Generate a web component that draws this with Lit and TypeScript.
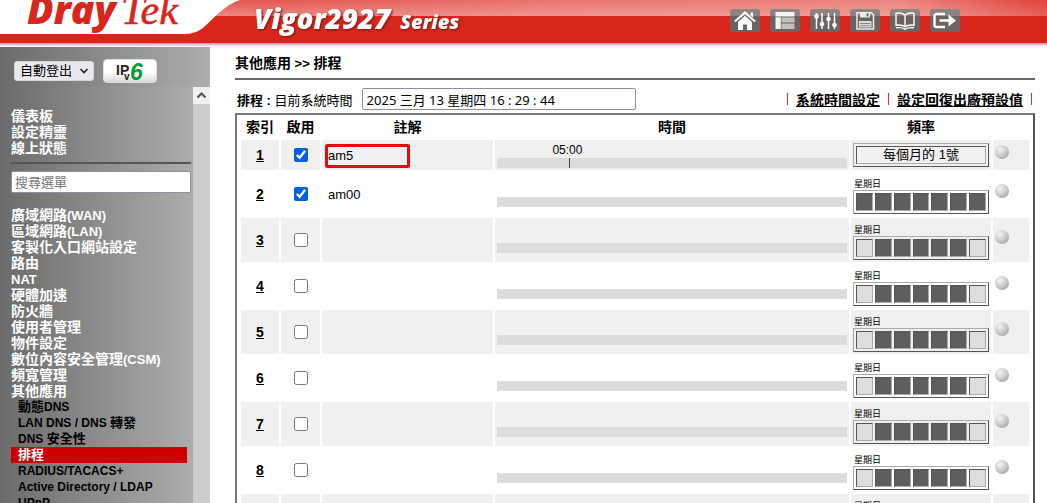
import { LitElement, html, svg, css } from "lit";
import { customElement, property, state } from "lit/decorators.js";
import { classMap } from "lit/directives/class-map.js";

const mixed = (text: string) =>
  text.split(/([\x20-\x7e]+)/).filter(Boolean).map((part) =>
    /^[\x20-\x7e]/.test(part) ? html`<span class="latin">${part}</span>` : part
  );

const ICONS: Record<string, unknown> = {
  home: svg`<path d="M5 12.5 15 3.5l10 9" fill="none" stroke="#fff" stroke-width="2.2"/><path d="M20.500 3.500h2.600v5l-2.600-2.200zM8 12.900l7-6.200 7 6.200V21h-5v-5.500h-4V21H8z" fill="#fff"/>`,
  layout: svg`<path d="M5.500 3h19v4.500h-19zM5.500 8.200h5.300V20H5.500z" fill="#f4f4f4"/><path d="M11.500 8.500h13v5h-13zM11.500 14.500h13V20h-13z" fill="#c4c0bf"/>`,
  sliders: svg`<path d="M6.500 4v16M12 4v16M18.500 4v16M24.500 4v16" stroke="#fff" stroke-width="1.500"/><g fill="#fff"><circle cx="6.500" cy="7.500" r="2.300"/><circle cx="12" cy="15" r="2.300"/><circle cx="18.500" cy="10" r="2.300"/><circle cx="24.500" cy="16" r="2.300"/></g>`,
  save: svg`<path d="M7 3.700h14.500L23.500 6v14H7z" fill="none" stroke="#eee" stroke-width="1.500"/><path d="M10 3.500h10v5H10z" fill="#eee"/><path d="M16.500 4.300h2V7.500h-2z" fill="#666"/><path d="M9 12h12.500v6.500H9z" fill="#ddd"/><path d="M10 14.500h10.500M10 16.700h10.500" stroke="#888"/>`,
  book: svg`<path d="M15 6c-2.500-2-6-2.200-9-1.700v12c3-.5 6.500-.3 9 1.500 2.500-1.800 6-2 9-1.500v-12C21 3.800 17.500 4 15 6v11.500M6 18.800c3-.4 6.500-.2 9 1.400 2.500-1.600 6-1.800 9-1.400" fill="none" stroke="#fff" stroke-width="1.400"/>`,
  logout: svg`<path d="M15 5H6.500q-2 0-2 2v9q0 2 2 2H15M9.500 11.500H20" fill="none" stroke="#fff" stroke-width="2.400"/><path d="M18.500 5.500 26 11.500l-7.500 6z" fill="#fff"/>`,
};

@customElement("top-banner")
class TopBanner extends LitElement {
  static styles = css`
    :host { display: block; }
    .bar { position: relative; display: flex; height: 47px; background: linear-gradient(#e4544d, #ec8782 16px, #d9261c 16px, #d9261c 43px, #b0a6a6 43px, #d0d0d0 45px, #fff 46px); }
    .wash { position: absolute; inset: 0 0 auto 0; height: 16px; background: linear-gradient(90deg, transparent 250px, #f4b0ad55 550px, #f4b0ad88 900px, #d9261c66); }
    .logo { position: relative; flex: none; width: 250px; height: 47px; }
    .model { position: relative; flex: none; width: 230px; height: 47px; }
    .sans { font-family: "Open Sans", sans-serif; font-weight: 800; font-style: italic; }
    .model .sans { fill: #fff; filter: drop-shadow(1px 1px 1px #7a1410); }
    .serif { font-family: "Liberation Serif", serif; font-style: italic; }
    .tools { position: relative; display: flex; gap: 10px; margin: 9px 87px 0 auto; }
    .tool { width: 30px; height: 23px; padding: 0; border: 0; border-radius: 3px; background: linear-gradient(#8d8583, #8b8280 7px, #6b6260 7px, #6d6563); }
    .tool svg { display: block; }
  `;
  render() {
    return html`<header class="bar">
      <div class="wash"></div>
      <svg class="logo" viewBox="0 0 250 47" role="img" aria-label="DrayTek">
        <path d="M0 0H240C224 5 211 21 203 28Q195 34 184 34H0Z" fill="#fff"/>
        <text class="sans" x="27" y="24" font-size="39" fill="#d9261c">Dray</text>
        <text class="serif" x="121" y="24" font-size="42" fill="#d9261c" stroke="#d9261c" stroke-width=".6">Tek</text>
      </svg>
      <svg class="model" viewBox="250 0 230 47" role="img" aria-label="Vigor2927 Series">
        <text class="sans" x="254" y="29" font-size="28">Vigor2927</text>
        <text class="sans" x="400" y="29" font-size="20">Series</text>
      </svg>
      <nav class="tools">
        ${Object.entries(ICONS).map(([name, icon]) => html`<button class="tool" aria-label=${name}><svg width="30" height="23" viewBox="0 0 30 23">${icon}</svg></button>`)}
      </nav>
    </header>`;
  }
}

const LINKS = ["儀表板", "設定精靈", "線上狀態"];
const MENU = ["廣域網路(WAN)", "區域網路(LAN)", "客製化入口網站設定", "路由", "NAT", "硬體加速", "防火牆", "使用者管理", "物件設定", "數位內容安全管理(CSM)", "頻寬管理", "其他應用"];
const SUB = ["動態DNS", "LAN DNS / DNS 轉發", "DNS 安全性", "排程", "RADIUS/TACACS+", "Active Directory / LDAP", "UPnP"];

@customElement("side-menu")
class SideMenu extends LitElement {
  static styles = css`
    :host { display: flex; flex-direction: column; width: 210px; height: 100%; font-family: "Liberation Sans", "Noto Sans CJK TC", sans-serif; }
    .session { display: flex; align-items: center; gap: 9px; flex: none; height: 40px; padding: 8px 14px 0; box-sizing: border-box; background: linear-gradient(90deg, #6b6b6b, #adadad); }
    .picker { position: relative; display: flex; }
    .select { width: 80px; height: 20px; padding: 0 0 0 5px; border: 1px solid #d5d5dc; border-radius: 3px; background: #e9e9ed; appearance: none; color: #000; font: 13px/18px "Liberation Sans", "Noto Sans CJK TC", sans-serif; }
    .arrow { position: absolute; right: 5px; top: 6px; pointer-events: none; }
    .ipv6 { width: 54px; height: 24px; padding: 0; border: 1px solid #ddd; border-radius: 4px; background: linear-gradient(#fff 55%, #d8d8d8); }
    .ipv6 svg { display: block; }
    .ip { font-family: "Liberation Sans", sans-serif; font-weight: bold; font-size: 14px; fill: #222; }
    .v { font-size: 10px; }
    .six { font-size: 23px; font-style: italic; fill: #0a9a3c; }
    .frame { display: flex; flex: 1; min-height: 0; }
    .nav { flex: 1; overflow: hidden; padding: 21px 2px 0 11px; background: linear-gradient(90deg, #6b6b6b, #adadad); font-weight: bold; font-size: 14px; line-height: 16px; }
    .list { margin: 0; padding: 0; list-style: none; }
    .item { height: 16px; white-space: nowrap; }
    .link { color: #fff; text-decoration: none; }
    .latin { font-size: 13px; }
    .rule { height: 0; margin: 6px 0 7px; border: 0; border-top: 2px solid #555; border-bottom: 0; }
    .search { display: block; box-sizing: border-box; width: 100%; height: 22px; margin: 0 0 14px; padding: 0 3px; border: 1px solid #8f8f9d; border-radius: 2px; background: #fff; font: 13px "Liberation Sans", "Noto Sans CJK TC", sans-serif; }
    .search::placeholder { color: #757575; opacity: 1; }
    .sub { margin-right: 4px; font-size: 13px; }
    .sub .item { padding-left: 7px; }
    .sub .link { color: #000; }
    .sub .latin { font-size: 12px; }
    .sub .active { background: #c00; }
    .sub .active .link { color: #fff; }
    .track { width: 17px; background: #cdcdcd; }
    .up { display: block; width: 17px; height: 17px; padding: 0; border: 0; background: #f0f0f0; }
    .up svg { display: block; }
  `;
  render() {
    const item = (text: string, active = false) => html`<li class=${classMap({ item: true, active })}><a class="link" href="#">${mixed(text)}</a></li>`;
    return html`
      <div class="session">
        <div class="picker">
          <select class="select" aria-label="自動登出"><option>自動登出</option></select>
          <svg class="arrow" width="10" height="8" viewBox="0 0 10 8"><path d="m1.500 2 3.500 3.500L8.500 2" fill="none" stroke="#222" stroke-width="1.600"/></svg>
        </div>
        <button class="ipv6" aria-label="IPv6"><svg width="52" height="22" viewBox="0 0 52 22">
          <text class="ip" x="12" y="15">IP<tspan class="v" x="20" y="20">v</tspan><tspan class="six" x="26" y="20">6</tspan></text>
        </svg></button>
      </div>
      <div class="frame">
        <nav class="nav">
          <ul class="list">${LINKS.map((t) => item(t))}</ul>
          <hr class="rule" />
          <input class="search" type="text" placeholder="搜尋選單" aria-label="搜尋選單" />
          <ul class="list">${MENU.map((t) => item(t))}</ul>
          <ul class="list sub">${SUB.map((t) => item(t, t === "排程"))}</ul>
        </nav>
        <div class="track"><button class="up" aria-label="向上捲動"><svg width="17" height="17" viewBox="0 0 17 17"><path d="m4.500 10.500 4-4 4 4" fill="none" stroke="#505050" stroke-width="2"/></svg></button></div>
      </div>`;
  }
}

interface Schedule { id: number; on: boolean; note: string; time?: string; hour?: number; monthly?: string; days: boolean[]; marked?: boolean; }
const WORKDAYS = [false, true, true, true, true, true, false];
const SCHEDULES: Schedule[] = [
  { id: 1, on: true, note: "am5", time: "05:00", hour: 5, monthly: "每個月的 1號", days: [], marked: true },
  { id: 2, on: true, note: "am00", days: WORKDAYS.map(() => true) },
  ...[3, 4, 5, 6, 7, 8, 9].map((id) => ({ id, on: false, note: "", days: WORKDAYS })),
];

@customElement("schedule-table")
class ScheduleTable extends LitElement {
  @property({ attribute: false }) rows: Schedule[] = [];
  static styles = css`
    :host { display: block; font-family: "Liberation Sans", "Noto Sans CJK TC", sans-serif; font-size: 13px; }
    .grid { width: 100%; table-layout: fixed; border: 2px solid #555; border-top-color: #777; border-left-color: #777; border-spacing: 2px 2px; padding: 0 2px; box-sizing: border-box; }
    .c-index { width: 38px; } .c-on { width: 39px; } .c-note { width: 171px; } .c-freq { width: 140px; } .c-led { width: 36px; }
    .head { height: 21px; padding: 0; font-size: 14px; line-height: 21px; }
    .cell { height: 44px; padding: 0 2px; box-sizing: border-box; vertical-align: middle; }
    .short .cell { height: 30px; }
    .odd .cell { background: #f0f0f0; }
    .center { text-align: center; }
    .index { color: #000; font-size: 14px; font-weight: bold; }
    .check { display: block; width: 14px; height: 14px; margin: 0 auto; accent-color: #0060df; }
    .cell.note { position: relative; padding-left: 6px; }
    .mark { position: absolute; left: 3px; top: 4px; width: 85px; height: 24px; box-sizing: border-box; border: 3px solid #e30b0b; border-radius: 2px; pointer-events: none; }
    .cell.when { vertical-align: bottom; padding-bottom: 9px; }
    .short .cell.when { padding-bottom: 2px; }
    .bar { position: relative; height: 10px; background: #dcdcdc; }
    .point { position: absolute; bottom: 0; display: flex; flex-direction: column; align-items: center; width: 40px; margin-left: -20px; font-size: 12px; line-height: 16px; }
    .time { margin-right: 5px; }
    .tick { width: 1px; height: 10px; background: #444; }
    .cell.freq { vertical-align: bottom; padding-bottom: 2px; }
    .short .cell.freq { padding-bottom: 3px; }
    .week { display: block; height: 12px; padding-left: 1px; font-size: 9px; line-height: 12px; }
    .box { display: flex; gap: 2px; height: 24px; padding: 2px; box-sizing: border-box; border: 1px solid; border-color: #aaa #555 #555 #aaa; }
    .day, .monthly { flex: 1; box-sizing: border-box; border: 1px solid; border-color: #555 #aaa #aaa #555; background: #ddd; }
    .day.set { background: #5e5e5e; }
    .monthly { background: none; text-align: center; line-height: 16px; }
    .cell.state { vertical-align: top; padding: 12px 2px 0; }
    .short .cell.state { padding-top: 5px; }
    .led { width: 14px; height: 14px; border-radius: 50%; background: radial-gradient(circle at 35% 30%, #f4f4f4, #c4c4c4 55%, #8c8c8c); }
  `;
  private frequency(row: Schedule) {
    return row.monthly
      ? html`<div class="box"><div class="monthly">${row.monthly}</div></div>`
      : html`<span class="week">星期日</span><div class="box">${row.days.map((set) => html`<div class=${classMap({ day: true, set })}></div>`)}</div>`;
  }
  render() {
    return html`<table class="grid">
      <colgroup><col class="c-index" /><col class="c-on" /><col class="c-note" /><col /><col class="c-freq" /><col class="c-led" /></colgroup>
      <thead><tr>${["索引", "啟用", "註解", "時間", "頻率", ""].map((t) => html`<th class="head">${t}</th>`)}</tr></thead>
      <tbody>${this.rows.map((row) => html`<tr class=${classMap({ odd: row.id % 2 === 1, short: !!row.monthly })}>
        <td class="cell center"><a class="index" href="#">${row.id}</a></td>
        <td class="cell"><input class="check" type="checkbox" aria-label="啟用 ${row.id}" .checked=${row.on} /></td>
        <td class="cell note">${row.note}${row.marked ? html`<span class="mark"></span>` : ""}</td>
        <td class="cell when"><div class="bar">${row.time ? html`<div class="point" style="left:${((row.hour ?? 0) / 24) * 100}%"><span class="time">${row.time}</span><span class="tick"></span></div>` : ""}</div></td>
        <td class="cell freq">${this.frequency(row)}</td>
        <td class="cell state"><div class="led"></div></td>
      </tr>`)}</tbody>
    </table>`;
  }
}

@customElement("app-root")
class AppRoot extends LitElement {
  @state() private schedules = SCHEDULES;
  static styles = css`
    :host { display: flex; flex-direction: column; height: 100vh; overflow: hidden; background: #fff; color: #000; font-family: "Liberation Sans", "Noto Sans CJK TC", sans-serif; font-size: 13px; }
    .body { display: flex; flex: 1; min-height: 0; }
    .main { flex: 1; min-width: 0; overflow: hidden; padding: 6px 12px 0 25px; }
    .title { margin: 0; height: 20px; font-size: 14px; line-height: 20px; }
    .latin { font-size: 13px; }
    .rule { height: 0; margin: 5px 0 7px; border: 0; border-top: 2px solid #666; }
    .info { display: flex; align-items: center; height: 24px; padding-left: 2px; margin-bottom: 2px; white-space: nowrap; }
    .clock { width: 274px; height: 22px; margin-left: 9px; padding: 0 4px; box-sizing: border-box; border: 1px solid #8f8f9d; border-radius: 2px; font: 13px "Noto Sans", "Noto Sans CJK TC", sans-serif; }
    .actions { display: flex; align-items: center; gap: 8px; margin: 0 3px 0 auto; font-size: 14px; }
    .action { color: #000; font-weight: bold; }
    .sep { width: 1px; height: 12px; background: #e0303c; }
  `;
  render() {
    return html`<top-banner></top-banner>
      <div class="body">
        <side-menu></side-menu>
        <main class="main">
          <h1 class="title">${mixed("其他應用 >> 排程")}</h1>
          <hr class="rule" />
          <div class="info">
            <label for="clock"><b>排程 : </b>目前系統時間</label>
            <input class="clock" id="clock" type="text" readonly value="2025 三月 13 星期四 16 : 29 : 44" />
            <nav class="actions"><span class="sep"></span><a class="action" href="#">系統時間設定</a><span class="sep"></span><a class="action" href="#">設定回復出廠預設值</a><span class="sep"></span></nav>
          </div>
          <schedule-table .rows=${this.schedules}></schedule-table>
        </main>
      </div>`;
  }
}
